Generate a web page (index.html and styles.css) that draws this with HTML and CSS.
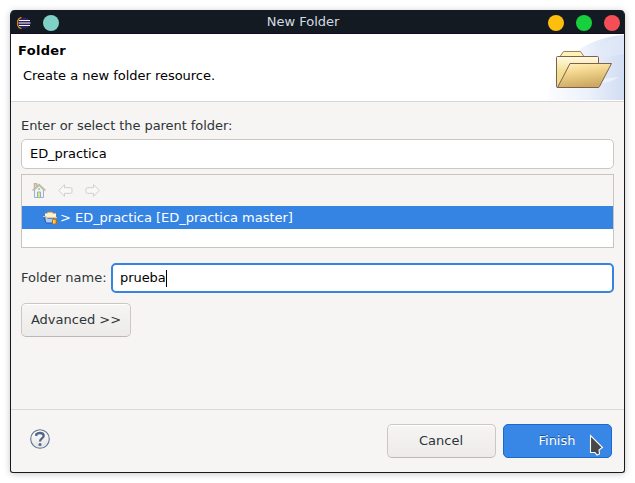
FILE: index.html
```html
<!DOCTYPE html>
<html lang="en">
<head>
<meta charset="utf-8">
<title>New Folder</title>
<link rel="stylesheet" href="styles.css">
</head>
<body>
<div class="window">
  <header class="titlebar">
    <div class="side">
      <svg class="app-icon" width="14" height="12" viewBox="0 0 14 12">
        <path d="M4.500 .3A6 6 0 0 0 4.500 11.700" fill="none" stroke="#d9881f" stroke-width="1.300"/>
        <circle cx="7.500" cy="6" r="5.500" fill="#30225c"/>
        <path d="M2 3.500h11M1.500 6h12M2 8.500h11" stroke="#f5f3fb" stroke-width="1.100"/>
      </svg>
      <span class="dot teal"></span>
    </div>
    <h1>New Folder</h1>
    <div class="side controls">
      <span class="dot yellow"></span><span class="dot green"></span><span class="dot red"></span>
    </div>
  </header>
  <section class="banner">
    <div class="heading"><h2>Folder</h2><p>Create a new folder resource.</p></div>
    <svg class="art" width="76" height="66" viewBox="0 0 76 66">
      <defs>
        <linearGradient id="sky"><stop offset="0" stop-color="#fbfcff"/><stop offset=".5" stop-color="#edf2fb"/><stop offset="1" stop-color="#d1ddf3"/></linearGradient>
        <linearGradient id="back" x2="0" y2="1"><stop offset="0" stop-color="#fffce5"/><stop offset=".5" stop-color="#f1df91"/><stop offset="1" stop-color="#eed68b"/></linearGradient>
        <linearGradient id="front" x2=".3" y2="1"><stop offset="0" stop-color="#fff3cc"/><stop offset=".3" stop-color="#f9df9a"/><stop offset="1" stop-color="#cdaa60"/></linearGradient>
      </defs>
      <path d="M0 66C1 33 35 3 76 1v65z" fill="url(#sky)"/>
      <path d="M39 29C50 25 62 22 76 20V1C61 4 47 15 39 29z" fill="#e3ebf9" opacity=".6"/>
      <path d="M47 50q13 0 24-7l-15 2z" fill="#f3f7ff" opacity=".65"/>
      <g transform="translate(1 0)">
        <path d="M11 22.500l3.500-5h17l3.500 5z" fill="#fff3b4" stroke="#9b8168"/>
        <path d="M8.500 53.500q-1 0-1-1v-29q0-1 1-1h40q1 0 1 1v30z" fill="url(#back)" stroke="#805f50"/>
        <path d="M8.500 53.500L21 29.500h41.500L50.500 52.500q-.5 1-1.500 1z" fill="url(#front)" stroke="#805f50"/>
      </g>
    </svg>
  </section>
  <main class="content">
    <label class="parent-label">Enter or select the parent folder:</label>
    <div class="entry parent">ED_practica</div>
    <div class="tree">
      <div class="tools">
        <svg width="14" height="15" viewBox="0 0 14 15">
          <path d="M2.500 7v7.500h9V7L7 2.500z" fill="#eef3f6" stroke="#9fb3c8"/>
          <path d="M.5 7.500L7 1.500l6.500 6M2.500 5V.5h2V3" fill="none" stroke="#c4b69c" stroke-width="1.500"/>
          <path d="M6 5h2v2H6z" fill="#bfd96a"/><path d="M5.500 14V9h3v5" fill="#dce77d" stroke="#94aec8"/>
        </svg>
        <svg width="15" height="13" viewBox="0 0 15 13"><path d="M.7 6.500L6.500.700v3h6q1.500 0 1.500 1.300v3q0 1.300-1.500 1.300h-6v3z" fill="#f8f8f7" stroke="#cfcfcd"/></svg>
        <svg width="15" height="13" viewBox="0 0 15 13"><path d="M14.300 6.500L8.500.700v3h-6Q1 3.700 1 5v3q0 1.300 1.500 1.300h6v3z" fill="#f8f8f7" stroke="#cfcfcd"/></svg>
      </div>
      <div class="row">
        <svg width="15" height="14" viewBox="0 0 15 14">
          <path d="M2 2h2.500V1h5v1H13v4H2z" fill="#fff2cf"/>
          <path d="M4.500 1h5" stroke="#b9783a"/>
          <path d="M2 2.500h2.500M9.500 2.500H13" stroke="#e2b877"/>
          <path d="M2.500 6v6h9.500l1.500-5.500z" fill="#a9cdf8"/>
          <path d="M1 6.500l2 5.500h8" fill="none" stroke="#2f56a0"/>
          <path d="M0 5.500h3.500l1 1H14" fill="none" stroke="#f3c57c"/>
          <path d="M4.500 7.500h8" stroke="#5c86c4"/>
          <path d="M9.500 8.700q2-1.400 4 0v3.800q-2 1.400-4 0z" fill="#f6a91f" stroke="#b66b0d"/>
          <path d="M10.800 9v3.500" stroke="#fff0b0"/>
        </svg>
        <span>&gt; ED_practica [ED_practica master]</span>
      </div>
    </div>
    <div class="name-row"><label>Folder name:</label><div class="entry focused"><span>prueba</span><i class="caret"></i></div></div>
    <button class="advanced">Advanced &gt;&gt;</button>
  </main>
  <footer class="footer">
    <svg class="help" width="20" height="20" viewBox="0 0 20 20">
      <defs><linearGradient id="h" x2="0" y2="1"><stop offset="0" stop-color="#fff"/><stop offset="1" stop-color="#e3e3e3"/></linearGradient></defs>
      <circle cx="10" cy="10" r="9.300" fill="url(#h)" stroke="#617592" stroke-width="1.100"/>
      <path d="M6.300 7V5.300Q7.500 4 10 4q3.700 0 3.700 2.800c0 2.600-3.700 2.600-3.700 5.600" fill="none" stroke="#516688" stroke-width="2.300"/>
      <circle cx="10" cy="15.500" r="1.500" fill="#516688"/>
    </svg>
    <button>Cancel</button>
    <button class="primary">Finish</button>
  </footer>
  <svg class="cursor" width="15" height="22" viewBox="0 0 15 22">
    <path d="M1.500 1.500v17h4.500l2 2.500 2.500-1-.5-4 3.500-2.500z" fill="#474747" stroke="#fff" stroke-width="1.100"/>
  </svg>
</div>
</body>
</html>
```
FILE: styles.css
```css
* { box-sizing: border-box; }
body {
  margin: 0;
  padding: 10px;
  width: 635px;
  height: 483px;
  overflow: hidden;
  background: #fff;
  color: #2e3436;
  font: 13px/16px "DejaVu Sans", sans-serif;
}
h1, h2, p { margin: 0; font-size: inherit; white-space: nowrap; }
svg { display: block; flex: none; }
.window {
  position: relative;
  display: flex;
  flex-direction: column;
  width: 615px;
  height: 463px;
  border: 1px solid #141a21;
  border-top: 0;
  border-radius: 5px 5px 3px 3px;
  background: #f6f5f4;
  box-shadow: 0 1px 7px rgba(0, 0, 0, .22);
}
.titlebar {
  display: flex;
  align-items: center;
  height: 24px;
  padding: 1px 4px 0 6px;
  border-radius: 4px 4px 0 0;
  background: #141a21;
  border-bottom: 1px solid #120b20;
  color: #d3dae3;
}
.titlebar h1 { font-weight: 400; margin: 0 31px 0 0; }
.side { display: flex; flex: 1; align-items: center; gap: 12px; }
.controls { justify-content: flex-end; }
.dot { width: 16px; height: 16px; margin-top: 2px; border-radius: 50%; }
.app-icon { margin-top: 2px; }
.teal { background: #7fd1c7; }
.yellow { background: #fdbe0d; }
.green { background: #16d13d; }
.red { background: #f54e56; }
.banner {
  display: flex;
  justify-content: space-between;
  height: 68px;
  background: #fff;
  border-bottom: 1px solid #d9d8d7;
  color: #000;
}
.heading { padding: 9px 0 0 7px; }
.heading h2 { font-weight: 700; letter-spacing: .3px; }
.heading p { margin: 9px 0 0 5px; letter-spacing: -.02px; }
.content { flex: 1; padding: 16px 10px 0; }
.parent-label { display: block; letter-spacing: -.06px; }
.entry {
  display: flex;
  align-items: center;
  height: 30px;
  padding: 0 8px;
  border: 1px solid #cdc7c2;
  border-radius: 5px;
  background: #fff;
  color: #000;
  letter-spacing: -.06px;
}
.parent { margin-top: 5px; }
.tree { height: 74px; margin-top: 5px; border: 1px solid #c9c5bd; background: #fff; }
.tools { display: flex; align-items: center; gap: 12px; height: 31px; padding-left: 10px; background: #f6f5f4; }
.row { display: flex; align-items: center; gap: 2px; height: 23px; padding-left: 21px; background: #3584e4; color: #fff; letter-spacing: -.03px; }
.name-row { display: flex; align-items: center; justify-content: space-between; margin-top: 15px; }
.focused { width: 503px; padding-left: 7px; border: 2px solid #3584e4; }
.caret { width: 1px; height: 17px; background: #000; }
button {
  height: 34px;
  padding: 0;
  border: 1px solid #cdc7c2;
  border-bottom-color: #bfb8b1;
  border-radius: 5px;
  background: linear-gradient(#f6f5f4, #edebe9);
  box-shadow: inset 0 1px #fff;
  color: #2e3436;
  font: inherit;
}
.advanced { display: block; width: 110px; margin-top: 10px; }
.footer { display: flex; align-items: flex-start; height: 63px; padding: 14px 12px 0 18px; border-top: 1px solid #dad9d8; }
.help { margin: 5px auto 0 1px; }
.footer button { width: 109px; padding-right: 1px; }
.footer .primary {
  margin-left: 7px;
  border-color: #1b6acb;
  background: #3886e5;
  box-shadow: none;
  color: #fff;
  text-shadow: 0 -1px rgba(0, 0, 0, .4);
}
.cursor { position: absolute; left: 578px; top: 424px; }
```
